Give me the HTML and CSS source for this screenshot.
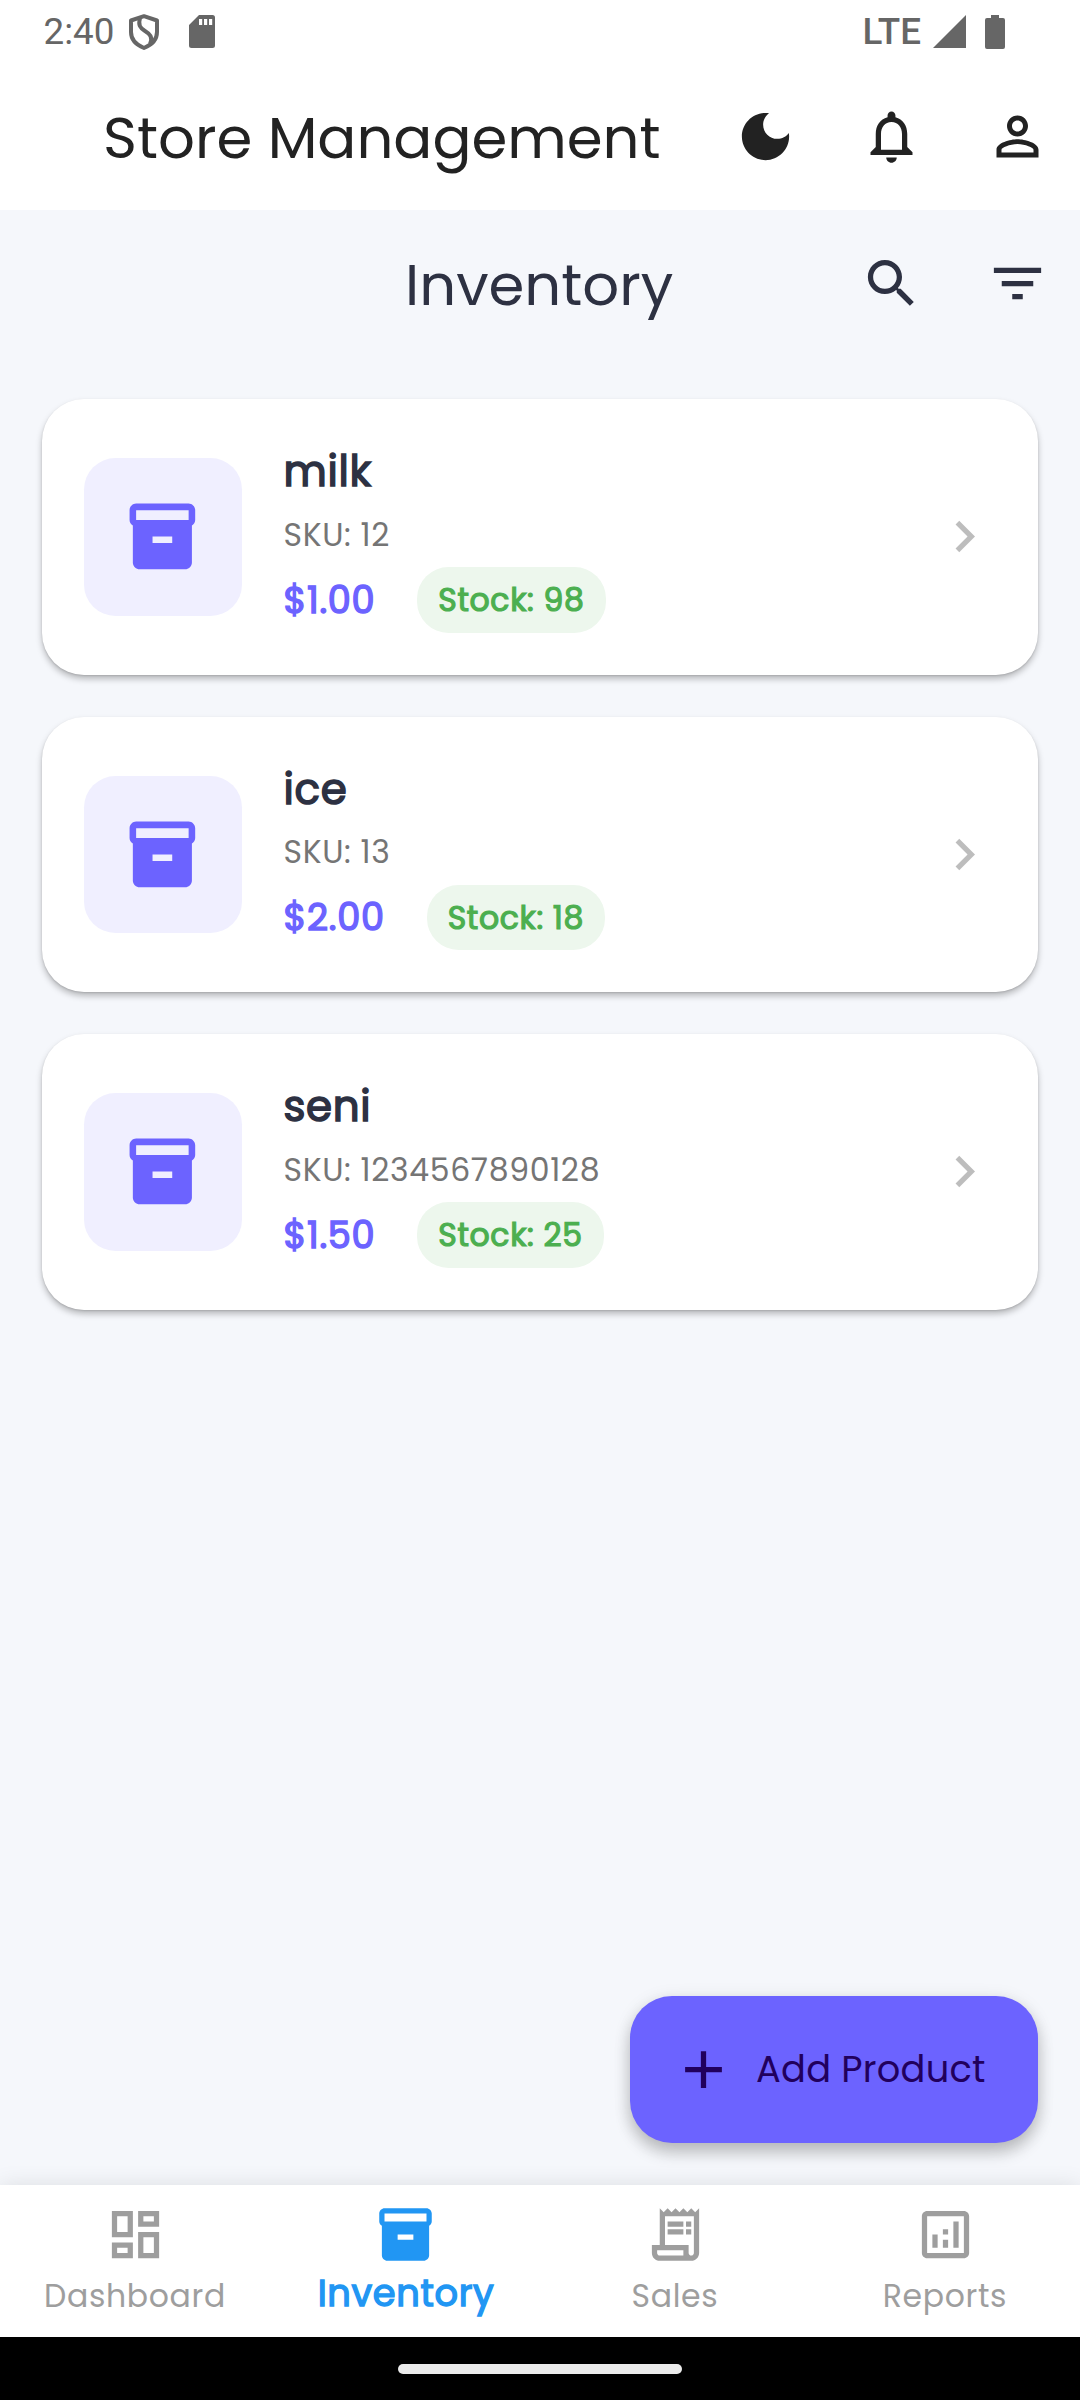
FILE: index.html
```html
<!DOCTYPE html>
<html lang="en">
<head>
<meta charset="utf-8">
<title>Store Management</title>
<link rel="stylesheet" href="styles.css">
</head>
<body>
<svg class="sprite" aria-hidden="true">
  <symbol id="i-box" viewBox="0 0 24 24"><path d="M20 2H4c-1 0-2 .9-2 2v3.010c0 .72.43 1.340 1 1.690V20c0 1.100 1.100 2 2 2h14c.9 0 2-.9 2-2V8.700c.57-.35 1-.97 1-1.690V4c0-1.100-1-2-2-2zm-5 12H9v-2h6v2zm5-7H4V4h16v3z"/></symbol>
  <symbol id="i-chevron" viewBox="0 0 24 24"><path d="M10 6L8.590 7.410 13.170 12l-4.580 4.590L10 18l6-6z"/></symbol>
</svg>
<div class="screen">
  <div class="statusbar">
    <span class="clock">2:40</span>
    <svg class="shield" viewBox="0 0 30 36"><path d="M15 2.200 28 6.500V18c0 7.500-5.500 13-13 16C7.500 31 2 25.500 2 18V6.500z" fill="none" stroke="currentColor" stroke-width="4" stroke-linejoin="round"/><path d="M11 4c-2 7 0 10 5 13s8 6 5 13" fill="none" stroke="currentColor" stroke-width="4"/></svg>
    <svg class="sd" viewBox="0 0 26 33"><path fill-rule="evenodd" d="M10 0h13.500a2.500 2.500 0 0 1 2.500 2.500v28a2.500 2.500 0 0 1-2.500 2.500h-21A2.500 2.500 0 0 1 0 30.500V10zM10 4v6h3.200V4zm5 0v6h3.200V4zm5 0v6h3.200V4z"/></svg>
    <span class="lte">LTE</span>
    <svg class="signal" viewBox="0 0 33 33"><path d="M33 0v33H0z"/></svg>
    <svg class="battery" viewBox="0 0 20 34"><path d="M6 0h8v3h4a2 2 0 0 1 2 2v27a2 2 0 0 1-2 2H2a2 2 0 0 1-2-2V5a2 2 0 0 1 2-2h4z"/></svg>
  </div>
  <header class="appbar">
    <h1 class="title">Store Management</h1>
    <button class="action" aria-label="Dark mode"><svg class="icon" viewBox="0 0 24 24"><path d="M12 3c-4.970 0-9 4.030-9 9s4.030 9 9 9 9-4.030 9-9c0-.46-.04-.92-.1-1.360-.98 1.370-2.580 2.260-4.400 2.260-2.980 0-5.400-2.420-5.400-5.400 0-1.810.89-3.420 2.260-4.400-.44-.06-.9-.1-1.360-.1z"/></svg></button>
    <button class="action" aria-label="Notifications"><svg class="icon" viewBox="0 0 24 24"><path d="M12 22c1.100 0 2-.9 2-2h-4c0 1.100.9 2 2 2zm6-6v-5c0-3.070-1.630-5.640-4.500-6.320V4c0-.83-.67-1.500-1.500-1.500s-1.500.67-1.500 1.500v.68C7.640 5.360 6 7.920 6 11v5l-2 2v1h16v-1l-2-2zm-2 1H8v-6c0-2.480 1.510-4.500 4-4.500s4 2.020 4 4.500v6z"/></svg></button>
    <button class="action" aria-label="Profile"><svg class="icon" viewBox="0 0 24 24"><path d="M12 5.900c1.160 0 2.100.94 2.100 2.100s-.94 2.100-2.100 2.100S9.900 9.160 9.900 8s.94-2.100 2.100-2.100m0 9c2.970 0 6.100 1.460 6.100 2.100v1.100H5.900V17c0-.64 3.130-2.100 6.100-2.100M12 4C9.790 4 8 5.790 8 8s1.790 4 4 4 4-1.790 4-4-1.790-4-4-4zm0 9c-2.670 0-8 1.340-8 4v3h16v-3c0-2.660-5.330-4-8-4z"/></svg></button>
  </header>
  <div class="subbar">
    <h2 class="heading">Inventory</h2>
    <button class="action" aria-label="Search"><svg class="icon" viewBox="0 0 24 24"><path d="M15.500 14h-.79l-.28-.27C15.410 12.590 16 11.110 16 9.500 16 5.910 13.090 3 9.500 3S3 5.910 3 9.500 5.910 16 9.500 16c1.610 0 3.090-.59 4.230-1.570l.27.28v.79l5 4.990L20.490 19l-4.990-5zm-6 0C7.010 14 5 11.990 5 9.500S7.010 5 9.500 5 14 7.010 14 9.500 11.990 14 9.500 14z"/></svg></button>
    <button class="action" aria-label="Filter"><svg class="icon" viewBox="0 0 24 24"><path d="M10 18h4v-2h-4v2zM3 6v2h18V6H3zm3 7h12v-2H6v2z"/></svg></button>
  </div>
  <main class="list">
    <article class="card">
      <div class="thumb"><svg><use href="#i-box"/></svg></div>
      <div class="info">
        <div class="name">milk</div>
        <div class="sku">SKU: 12</div>
        <div class="meta"><span class="price">$1.00</span><span class="badge">Stock: 98</span></div>
      </div>
      <svg class="icon chevron"><use href="#i-chevron"/></svg>
    </article>
    <article class="card">
      <div class="thumb"><svg><use href="#i-box"/></svg></div>
      <div class="info">
        <div class="name">ice</div>
        <div class="sku">SKU: 13</div>
        <div class="meta"><span class="price">$2.00</span><span class="badge">Stock: 18</span></div>
      </div>
      <svg class="icon chevron"><use href="#i-chevron"/></svg>
    </article>
    <article class="card">
      <div class="thumb"><svg><use href="#i-box"/></svg></div>
      <div class="info">
        <div class="name">seni</div>
        <div class="sku">SKU: 1234567890128</div>
        <div class="meta"><span class="price">$1.50</span><span class="badge">Stock: 25</span></div>
      </div>
      <svg class="icon chevron"><use href="#i-chevron"/></svg>
    </article>
  </main>
  <button class="fab"><svg class="icon" viewBox="0 0 24 24"><path d="M19 13h-6v6h-2v-6H5v-2h6V5h2v6h6v2z"/></svg><span>Add Product</span></button>
  <nav class="tabs">
    <a class="tab"><svg class="icon" viewBox="0 0 24 24"><path d="M19 5v2h-4V5h4M9 5v6H5V5h4m10 8v6h-4v-6h4M9 17v2H5v-2h4M21 3h-8v6h8V3zM11 3H3v10h8V3zm10 8h-8v10h8V11zm-10 4H3v6h8v-6z"/></svg><span>Dashboard</span></a>
    <a class="tab active"><svg class="icon"><use href="#i-box"/></svg><span>Inventory</span></a>
    <a class="tab"><svg class="icon" viewBox="0 0 24 24"><path d="M19.500 3.500L18 2l-1.500 1.500L15 2l-1.500 1.500L12 2l-1.500 1.500L9 2 7.500 3.500 6 2v14H3v3c0 1.660 1.340 3 3 3h12c1.660 0 3-1.340 3-3V2l-1.500 1.500zM15 20H6c-.55 0-1-.45-1-1v-1h10v2zm4-1c0 .55-.45 1-1 1s-1-.45-1-1v-3H8V5h11v14z"/><path d="M9 7h6v2H9zM16 7h2v2h-2zM9 10h6v2H9zM16 10h2v2h-2z"/></svg><span>Sales</span></a>
    <a class="tab"><svg class="icon" viewBox="0 0 24 24"><path d="M19 3H5c-1.100 0-2 .9-2 2v14c0 1.100.9 2 2 2h14c1.100 0 2-.9 2-2V5c0-1.100-.9-2-2-2zm0 16H5V5h14v14z"/><path d="M7 12h2v5H7zM15 7h2v10h-2zM11 14h2v3h-2zM11 10h2v2h-2z"/></svg><span>Reports</span></a>
  </nav>
  <div class="gesture"><div class="pill"></div></div>
</div>
</body>
</html>
```
FILE: styles.css
```css
* { box-sizing: border-box; }
body {
  margin: 0;
  font-family: Poppins, Inter, "Open Sans", sans-serif;
  background: #f5f7fb;
}
.sprite { display: none; }
svg { fill: currentColor; flex: none; }
button { border: 0; padding: 0; background: none; font: inherit; color: inherit; }
h1, h2 { margin: 0; font-weight: 400; }
.icon { width: 63px; height: 63px; }
.screen {
  position: relative;
  width: 1080px;
  height: 2400px;
  display: flex;
  flex-direction: column;
  background: #f5f7fb;
  overflow: hidden;
}

/* System status bar */
.statusbar {
  height: 63px;
  display: flex;
  align-items: center;
  padding: 0 75px 0 43.5px;
  background: #fff;
  color: #666;
  font: 36.75px/62px Roboto, sans-serif;
}
.clock { width: 85.5px; }
.shield { width: 30px; height: 36px; }
.sd { width: 26px; height: 33px; margin-left: 30px; }
.lte { margin-left: auto; font-weight: 500; }
.signal { width: 33px; height: 33px; margin-left: 12px; }
.battery { width: 20px; height: 34px; margin-left: 19px; }

/* Title bars */
.appbar {
  height: 147px;
  display: flex;
  align-items: center;
  background: #fff;
  color: #222;
}
.title { flex: 1; padding: 2px 0 0 103px; font-size: 57.75px; white-space: nowrap; }
.action { width: 126px; height: 126px; display: flex; align-items: center; justify-content: center; }
.subbar {
  height: 147px;
  display: flex;
  align-items: center;
  color: #2d3142;
}
.heading { flex: 1; padding: 2px 0 0 405px; font-size: 57.75px; }

/* Product list */
.list {
  flex: 1;
  display: flex;
  flex-direction: column;
  gap: 42px;
  padding: 42px;
}
.card {
  display: flex;
  align-items: center;
  height: 275.5px;
  padding: 42px;
  border-radius: 42px;
  background: #fff;
  box-shadow: 0 4px 6px rgba(0,0,0,.25), 0 1px 2px rgba(0,0,0,.12);
}
.thumb {
  width: 157.5px;
  height: 157.5px;
  border-radius: 31.5px;
  background: #f0efff;
  color: #6c63ff;
  display: flex;
  align-items: center;
  justify-content: center;
}
.thumb svg { width: 78.75px; height: 78.75px; }
.info { flex: 1; margin-left: 42px; height: 191.5px; display: flex; flex-direction: column; letter-spacing: .656px; }
.name { color: #2d3142; font-size: 42px; -webkit-text-stroke: 1.5px; line-height: 61px; }
.sku { color: #757575; font-size: 31.5px; line-height: 47px; margin-top: 9.5px; }
.meta { display: flex; align-items: center; gap: 42px; margin-top: auto; }
.price { color: #6c63ff; font-size: 36.75px; -webkit-text-stroke: 1.4px; }
.badge {
  height: 65.5px;
  padding: 0 21px;
  border-radius: 31.5px;
  background: #edf7ed;
  color: #4caf50;
  font-size: 31.5px;
  -webkit-text-stroke: 1.2px;
  line-height: 67px;
}
.chevron { color: #bdbdbd; }

/* Floating action button */
.fab {
  position: absolute;
  right: 42px;
  top: 1995.5px;
  width: 408px;
  height: 147px;
  display: flex;
  align-items: center;
  padding-left: 42px;
  gap: 21px;
  border-radius: 42px;
  background: #6c63ff;
  color: #21005d;
  font-size: 36.75px;
  letter-spacing: .2625px;
  box-shadow: 0 10px 16px rgba(0,0,0,.2), 0 3px 18px rgba(0,0,0,.1);
}

/* Bottom navigation */
.tabs {
  height: 152px;
  display: flex;
  background: #fff;
  color: #9e9e9e;
  font-size: 31.5px;
  letter-spacing: .656px;
  box-shadow: 0 0 21px rgba(0,0,0,.1);
}
.tab { flex: 1; display: flex; flex-direction: column; align-items: center; padding-top: 18px; line-height: 60px; }
.tab.active { color: #2196f3; font-size: 36.75px; line-height: 54px; }
.tab.active span { -webkit-text-stroke: 1.4px; margin-left: 2px; }
.gesture { height: 63px; display: flex; align-items: center; justify-content: center; background: #000; }
.pill { width: 284px; height: 10px; border-radius: 5px; background: #ebebeb; }
```
